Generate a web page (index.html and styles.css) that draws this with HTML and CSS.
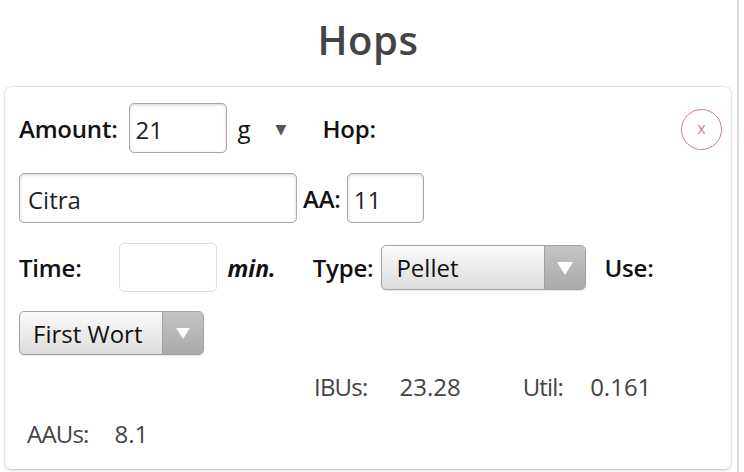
FILE: index.html
```html
<!DOCTYPE html>
<html lang="en">
<head>
    <meta charset="UTF-8">
    <meta name="viewport" content="width=device-width, initial-scale=1.0">
    <title>Hops</title>
    <link rel="stylesheet" href="styles.css">
</head>
<body>
    <div class="page">
        <h1>Hops</h1>

        <div class="card">
            <div class="row">
                <label class="label">Amount:</label>
                <input type="text" class="field field-amount" value="21">
                <span class="unit">g</span>
                <span class="unit-arrow">&#9660;</span>
                <label class="label label-hop">Hop:</label>
                <button class="remove">x</button>
            </div>

            <div class="row">
                <input type="text" class="field field-name" value="Citra">
                <label class="label label-aa">AA:</label>
                <input type="text" class="field field-aa" value="11">
            </div>

            <div class="row">
                <label class="label">Time:</label>
                <input type="text" class="field field-time" value="">
                <span class="min">min.</span>
                <label class="label label-type">Type:</label>
                <div class="select select-type">
                    <span class="select-text">Pellet</span>
                    <span class="select-arrow"><span class="tri"></span></span>
                </div>
                <label class="label label-use">Use:</label>
            </div>

            <div class="row">
                <div class="select select-use">
                    <span class="select-text">First Wort</span>
                    <span class="select-arrow"><span class="tri"></span></span>
                </div>
            </div>

            <div class="stats">
                <div class="stats-line stats-first">
                    <span class="stat-label">IBUs:</span>
                    <span class="stat-value ibu">23.28</span>
                    <span class="stat-label">Util:</span>
                    <span class="stat-value util">0.161</span>
                </div>
                <div class="stats-line stats-second">
                    <span class="stat-label">AAUs:</span>
                    <span class="stat-value aau">8.1</span>
                </div>
            </div>
        </div>
    </div>
</body>
</html>
```

FILE: styles.css
```css
body {
    margin: 0;
    font-family: "Open Sans", "DejaVu Sans", sans-serif;
    background: #fff;
    color: #111;
}
.page {
    width: 739px;
    min-height: 472px;
    border-right: 2px solid #ddd;
    box-sizing: border-box;
    padding: 0 6px 0 5px;
}
h1 {
    margin: 0 0 8px;
    font-size: 40px;
    font-weight: 600;
    line-height: 79px;
    text-align: center;
    color: #444;
    letter-spacing: 0.5px;
}
.card {
    border-radius: 6px;
    box-shadow: 0 1px 3px rgba(0, 0, 0, 0.28), 0 -1px 1px rgba(0, 0, 0, 0.08);
    padding: 16px 12px 12px 14px;
}
.row {
    display: flex;
    align-items: center;
    margin-bottom: 20px;
}
.row:nth-child(3) {
    margin-bottom: 19px;
}
.label {
    font-size: 24px;
    font-weight: 600;
    color: #111;
    letter-spacing: -0.2px;
}
.field {
    font-family: inherit;
    font-size: 24px;
    color: #222;
    height: 50px;
    box-sizing: border-box;
    padding: 2px 8px 0;
    border: 1px solid #a9a9a9;
    border-radius: 5px;
    box-shadow: inset 0 1px 3px rgba(0, 0, 0, 0.18);
    background: #fff;
    outline: none;
}
.field-amount {
    width: 98px;
    margin-left: 11px;
    padding-left: 6px;
}
.unit {
    font-size: 24px;
    margin-left: 11px;
    color: #111;
}
.unit-arrow {
    font-size: 14px;
    color: #555;
    margin-left: 25px;
}
.label-hop {
    margin-left: 36px;
}
.remove {
    margin-left: auto;
    margin-right: -3px;
    width: 41px;
    height: 41px;
    border-radius: 50%;
    border: 1.5px solid #c97f7f;
    background: #fff;
    color: #c97f7f;
    font-family: inherit;
    font-size: 16px;
    line-height: 1;
    padding: 0 0 3px;
    margin-top: 3px;
}
.field-name {
    width: 278px;
}
.label-aa {
    margin-left: 6px;
}
.field-aa {
    width: 77px;
    margin-left: 6px;
    padding-left: 6px;
}
.field-time {
    width: 98px;
    height: 49px;
    margin-left: 37px;
    border-color: #ddd;
    box-shadow: none;
}
.min {
    font-size: 23px;
    font-weight: 700;
    font-style: italic;
    margin-left: 11px;
}
.label-type {
    margin-left: 37px;
}
.label-use {
    margin-left: 18px;
}
.select {
    display: flex;
    box-sizing: border-box;
    border: 1px solid #a4a4a4;
    border-radius: 5px;
    background: linear-gradient(#fbfbfb, #dcdcdc);
    overflow: hidden;
    box-shadow: 0 1px 1px rgba(0, 0, 0, 0.1);
}
.select-text {
    flex: 1;
    font-size: 24px;
    color: #111;
    display: flex;
    align-items: center;
}
.select-arrow {
    width: 40px;
    background: linear-gradient(#c4c4c4, #aaaaaa);
    border-left: 1px solid #a0a0a0;
    display: flex;
    align-items: center;
    justify-content: center;
}
.tri {
    width: 0;
    height: 0;
    border-left: 8px solid transparent;
    border-right: 8px solid transparent;
    border-top: 13px solid #fff;
    margin-top: 1px;
}
.select-type {
    width: 205px;
    height: 45px;
    margin-left: 8px;
}
.select-type .select-text {
    padding-left: 14px;
}
.select-use {
    width: 185px;
    height: 44px;
}
.select-use .select-text {
    padding-left: 13px;
}
.select-use .tri {
    border-left-width: 7px;
    border-right-width: 7px;
    border-top-width: 11px;
}
.stats {
    margin-top: -12px;
    color: #444;
    font-size: 24px;
    line-height: 47px;
}
.stats-line {
    display: flex;
}
.stat-label {
    letter-spacing: -0.8px;
}
.stats-first {
    padding-left: 295px;
}
.stats-second {
    padding-left: 8px;
}
.stat-value.ibu {
    margin-left: 32px;
    margin-right: 62px;
}
.stat-value.util {
    margin-left: 27px;
}
.stat-value.aau {
    margin-left: 26px;
}
.row:last-of-type {
    margin-bottom: 0;
}
```
